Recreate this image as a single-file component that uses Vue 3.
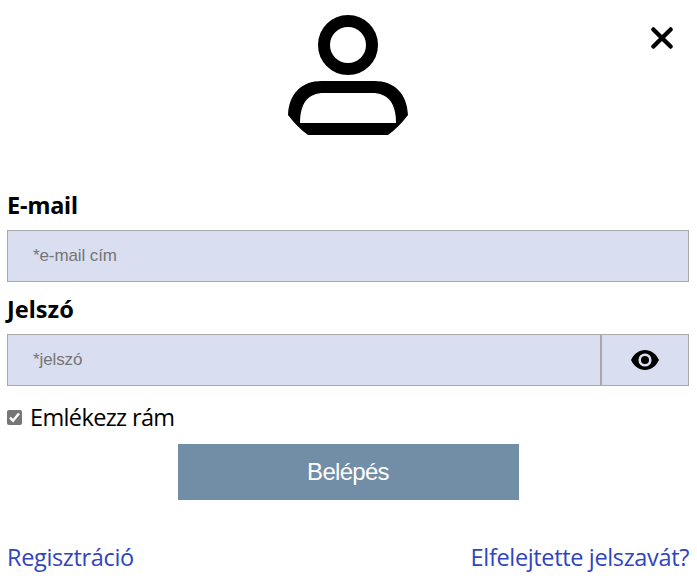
<script setup>
import { ref } from 'vue'

const email = ref('')
const password = ref('')
const remember = ref(true)
const visible = ref(false)
</script>

<template>
  <form class="login" @submit.prevent>
    <header class="top">
      <svg class="avatar" viewBox="0 0 120 120" aria-hidden="true">
        <circle cx="60" cy="30" r="24" fill="none" stroke="#000" stroke-width="12" />
        <path fill-rule="evenodd" d="M0 100C1 79 13 66 34 66H86C107 66 119 79 120 100Q111 112 100 120H20Q9 112 0 100ZM12 108H108C108 88 100 78 84 78H36C20 78 12 88 12 108Z" />
      </svg>
      <button class="close" type="button">
        <svg viewBox="0 0 22 22"><path d="M2.400 2.400L19.600 19.600M19.600 2.400L2.400 19.600" stroke="#000" stroke-width="4.300" stroke-linecap="round" /></svg>
      </button>
    </header>

    <label class="label email-label" for="email"><span>E-mail</span></label>
    <input id="email" v-model="email" class="field" type="text" placeholder="*e-mail cím" />

    <label class="label pass-label" for="password"><span>Jelszó</span></label>
    <div class="password">
      <input id="password" v-model="password" class="field" :type="visible ? 'text' : 'password'" placeholder="*jelszó" />
      <button class="eye" type="button" @click="visible = !visible">
        <svg viewBox="0 0 28 20">
          <path d="M0 10C3 3.800 8 0 14 0s11 3.800 14 10c-3 6.200-8 10-14 10S3 16.200 0 10Z" />
          <circle cx="14" cy="10" r="5.300" fill="none" stroke="#d9def0" stroke-width="2.600" />
        </svg>
      </button>
    </div>

    <label class="remember">
      <input v-model="remember" type="checkbox" />
      <svg class="box" viewBox="0 0 15 15">
        <rect width="15" height="15" rx="2" fill="#767676" />
        <path v-if="remember" d="M3 7.700L6 10.700L12 3.500" fill="none" stroke="#fff" stroke-width="2.400" />
      </svg>
      <span>Emlékezz rám</span>
    </label>

    <button class="submit" type="submit">Belépés</button>

    <nav class="links">
      <a class="register" href="#">Regisztráció</a>
      <a class="forgot" href="#">Elfelejtette jelszavát?</a>
    </nav>
  </form>
</template>

<style>
body {
  background: #fff;
}
</style>

<style scoped>
.login {
  box-sizing: border-box;
  width: 697px;
  height: 578px;
  padding: 15px 8px 0 7px;
  display: flex;
  flex-direction: column;
  overflow: hidden;
  color: #000;
  font-family: "Open Sans", "Noto Sans", sans-serif;
  font-size: 23.5px;
  line-height: 32px;
}
button {
  margin: 0;
  padding: 0;
  border: 0;
  background: none;
}
svg {
  display: block;
}
.top {
  display: grid;
  grid-template-columns: 1fr 120px 1fr;
  height: 174px;
}
.avatar {
  grid-column: 2;
  width: 120px;
  height: 120px;
}
.close {
  align-self: start;
  justify-self: end;
  margin: 12px 16px 0 0;
}
.close svg {
  width: 22px;
  height: 22px;
}
.label {
  height: 32px;
  font-family: "Noto Sans", "Open Sans", sans-serif;
  font-weight: 700;
}
.email-label {
  letter-spacing: -0.15px;
  margin-bottom: 9px;
}
.pass-label {
  margin: 11px 0 9px;
}
.field {
  box-sizing: border-box;
  width: 100%;
  height: 52px;
  margin: 0;
  padding: 0 25px;
  border: 1px solid #a9a9a9;
  border-radius: 0;
  outline: 0;
  background: #d9def0;
  font: 17px "Liberation Sans", Arial, sans-serif;
  letter-spacing: -0.1px;
}
.field::placeholder {
  color: #757575;
}
.password {
  display: grid;
  grid-template-columns: 594px 88px;
}
.eye {
  display: flex;
  align-items: center;
  justify-content: center;
  height: 52px;
  border: 1px solid #a9a9a9;
  background: #d9def0;
}
.eye svg {
  width: 28px;
  height: 20px;
}
.remember {
  display: flex;
  align-items: center;
  gap: 8px;
  height: 32px;
  margin-top: 15px;
  letter-spacing: -0.63px;
}
.remember input {
  appearance: none;
  width: 0;
  height: 0;
  margin: 0 -8px 0 0;
}
.box {
  width: 15px;
  height: 15px;
}
.submit {
  align-self: center;
  width: 341px;
  height: 56px;
  margin-top: 11px;
  background: #728da6;
  color: #fff;
  font: 24px "Liberation Sans", Arial, sans-serif;
  letter-spacing: -0.7px;
}
.links {
  display: flex;
  justify-content: space-between;
  margin-top: 41px;
}
.links a {
  color: #2f45bd;
  text-decoration: none;
  white-space: nowrap;
  letter-spacing: -0.35px;
}
</style>
